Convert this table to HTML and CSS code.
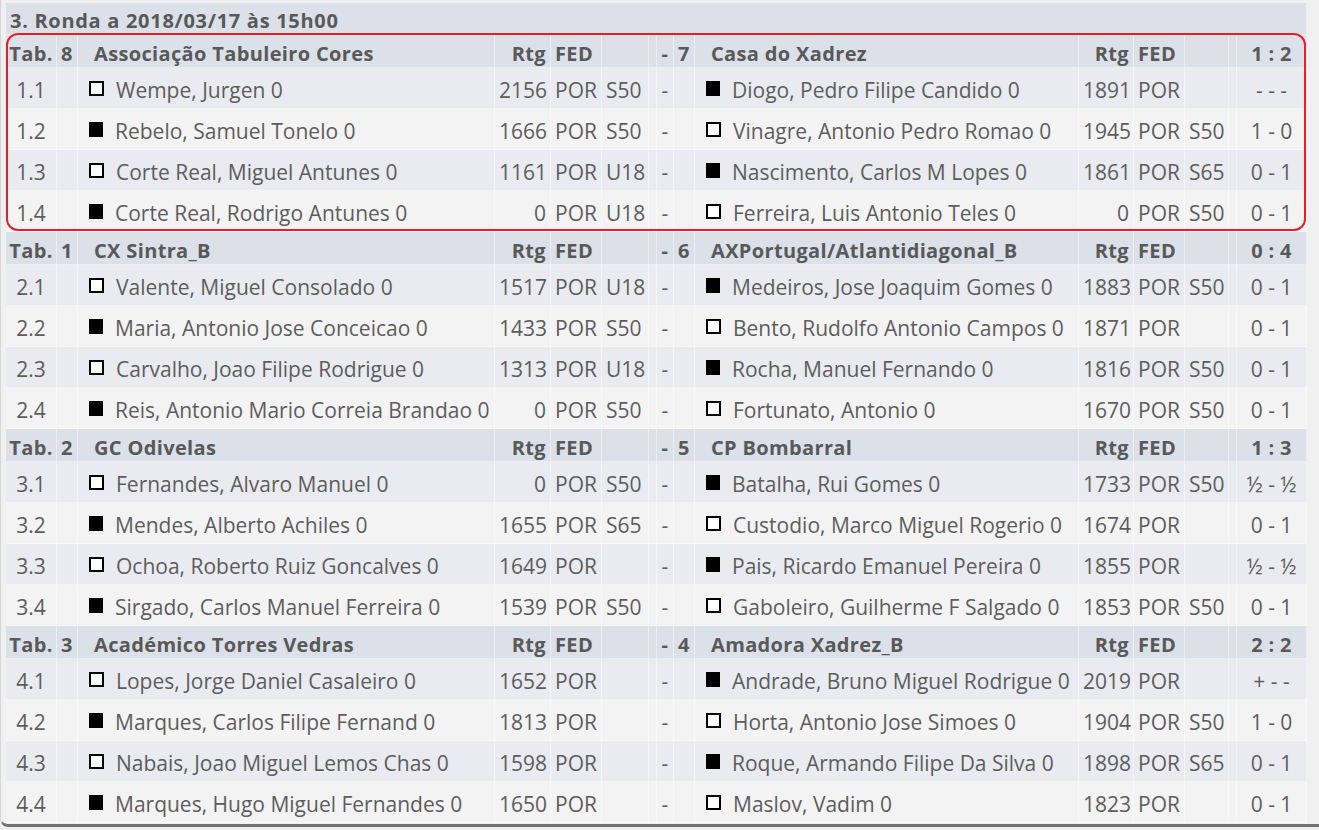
FILE: index.html
```html
<!DOCTYPE html>
<html>
<head>
<meta charset="utf-8">
<link rel="stylesheet" href="styles.css">
</head>
<body>
<div class="frame">
<table class="pair">
<colgroup>
<col class="w1"><col class="w2"><col class="w3"><col class="w4"><col class="w5"><col class="w6"><col class="w7"><col class="w8"><col class="w9"><col class="w10"><col class="w11"><col class="w12"><col class="w13"><col class="w14"><col class="w15">
</colgroup>
<tr class="ttl"><td colspan="15">3. Ronda a 2018/03/17 às 15h00</td></tr>

<tr class="hd"><td class="c">Tab.</td><td class="c">8</td><td class="tm">Associação Tabuleiro Cores</td><td class="r">Rtg</td><td>FED</td><td></td><td></td><td class="c">-</td><td class="c">7</td><td class="tm">Casa do Xadrez</td><td class="r">Rtg</td><td>FED</td><td></td><td></td><td class="c">1 : 2</td></tr>
<tr class="ra"><td class="c">1.1</td><td></td><td class="nm"><span class="sq"></span>Wempe, Jurgen 0</td><td class="r">2156</td><td>POR</td><td>S50</td><td></td><td class="c">-</td><td></td><td class="nm"><span class="sq bk"></span>Diogo, Pedro Filipe Candido 0</td><td class="r">1891</td><td>POR</td><td></td><td></td><td class="c">- - -</td></tr>
<tr class="rb"><td class="c">1.2</td><td></td><td class="nm"><span class="sq bk"></span>Rebelo, Samuel Tonelo 0</td><td class="r">1666</td><td>POR</td><td>S50</td><td></td><td class="c">-</td><td></td><td class="nm"><span class="sq"></span>Vinagre, Antonio Pedro Romao 0</td><td class="r">1945</td><td>POR</td><td>S50</td><td></td><td class="c">1 - 0</td></tr>
<tr class="ra"><td class="c">1.3</td><td></td><td class="nm"><span class="sq"></span>Corte Real, Miguel Antunes 0</td><td class="r">1161</td><td>POR</td><td>U18</td><td></td><td class="c">-</td><td></td><td class="nm"><span class="sq bk"></span>Nascimento, Carlos M Lopes 0</td><td class="r">1861</td><td>POR</td><td>S65</td><td></td><td class="c">0 - 1</td></tr>
<tr class="rb"><td class="c">1.4</td><td></td><td class="nm"><span class="sq bk"></span>Corte Real, Rodrigo Antunes 0</td><td class="r">0</td><td>POR</td><td>U18</td><td></td><td class="c">-</td><td></td><td class="nm"><span class="sq"></span>Ferreira, Luis Antonio Teles 0</td><td class="r">0</td><td>POR</td><td>S50</td><td></td><td class="c">0 - 1</td></tr>

<tr class="hd"><td class="c">Tab.</td><td class="c">1</td><td class="tm">CX Sintra_B</td><td class="r">Rtg</td><td>FED</td><td></td><td></td><td class="c">-</td><td class="c">6</td><td class="tm">AXPortugal/Atlantidiagonal_B</td><td class="r">Rtg</td><td>FED</td><td></td><td></td><td class="c">0 : 4</td></tr>
<tr class="ra"><td class="c">2.1</td><td></td><td class="nm"><span class="sq"></span>Valente, Miguel Consolado 0</td><td class="r">1517</td><td>POR</td><td>U18</td><td></td><td class="c">-</td><td></td><td class="nm"><span class="sq bk"></span>Medeiros, Jose Joaquim Gomes 0</td><td class="r">1883</td><td>POR</td><td>S50</td><td></td><td class="c">0 - 1</td></tr>
<tr class="rb"><td class="c">2.2</td><td></td><td class="nm"><span class="sq bk"></span>Maria, Antonio Jose Conceicao 0</td><td class="r">1433</td><td>POR</td><td>S50</td><td></td><td class="c">-</td><td></td><td class="nm"><span class="sq"></span>Bento, Rudolfo Antonio Campos 0</td><td class="r">1871</td><td>POR</td><td></td><td></td><td class="c">0 - 1</td></tr>
<tr class="ra"><td class="c">2.3</td><td></td><td class="nm"><span class="sq"></span>Carvalho, Joao Filipe Rodrigue 0</td><td class="r">1313</td><td>POR</td><td>U18</td><td></td><td class="c">-</td><td></td><td class="nm"><span class="sq bk"></span>Rocha, Manuel Fernando 0</td><td class="r">1816</td><td>POR</td><td>S50</td><td></td><td class="c">0 - 1</td></tr>
<tr class="rb"><td class="c">2.4</td><td></td><td class="nm"><span class="sq bk"></span>Reis, Antonio Mario Correia Brandao 0</td><td class="r">0</td><td>POR</td><td>S50</td><td></td><td class="c">-</td><td></td><td class="nm"><span class="sq"></span>Fortunato, Antonio 0</td><td class="r">1670</td><td>POR</td><td>S50</td><td></td><td class="c">0 - 1</td></tr>

<tr class="hd"><td class="c">Tab.</td><td class="c">2</td><td class="tm">GC Odivelas</td><td class="r">Rtg</td><td>FED</td><td></td><td></td><td class="c">-</td><td class="c">5</td><td class="tm">CP Bombarral</td><td class="r">Rtg</td><td>FED</td><td></td><td></td><td class="c">1 : 3</td></tr>
<tr class="ra"><td class="c">3.1</td><td></td><td class="nm"><span class="sq"></span>Fernandes, Alvaro Manuel 0</td><td class="r">0</td><td>POR</td><td>S50</td><td></td><td class="c">-</td><td></td><td class="nm"><span class="sq bk"></span>Batalha, Rui Gomes 0</td><td class="r">1733</td><td>POR</td><td>S50</td><td></td><td class="c">½ - ½</td></tr>
<tr class="rb"><td class="c">3.2</td><td></td><td class="nm"><span class="sq bk"></span>Mendes, Alberto Achiles 0</td><td class="r">1655</td><td>POR</td><td>S65</td><td></td><td class="c">-</td><td></td><td class="nm"><span class="sq"></span>Custodio, Marco Miguel Rogerio 0</td><td class="r">1674</td><td>POR</td><td></td><td></td><td class="c">0 - 1</td></tr>
<tr class="ra"><td class="c">3.3</td><td></td><td class="nm"><span class="sq"></span>Ochoa, Roberto Ruiz Goncalves 0</td><td class="r">1649</td><td>POR</td><td></td><td></td><td class="c">-</td><td></td><td class="nm"><span class="sq bk"></span>Pais, Ricardo Emanuel Pereira 0</td><td class="r">1855</td><td>POR</td><td></td><td></td><td class="c">½ - ½</td></tr>
<tr class="rb"><td class="c">3.4</td><td></td><td class="nm"><span class="sq bk"></span>Sirgado, Carlos Manuel Ferreira 0</td><td class="r">1539</td><td>POR</td><td>S50</td><td></td><td class="c">-</td><td></td><td class="nm"><span class="sq"></span>Gaboleiro, Guilherme F Salgado 0</td><td class="r">1853</td><td>POR</td><td>S50</td><td></td><td class="c">0 - 1</td></tr>

<tr class="hd"><td class="c">Tab.</td><td class="c">3</td><td class="tm">Académico Torres Vedras</td><td class="r">Rtg</td><td>FED</td><td></td><td></td><td class="c">-</td><td class="c">4</td><td class="tm">Amadora Xadrez_B</td><td class="r">Rtg</td><td>FED</td><td></td><td></td><td class="c">2 : 2</td></tr>
<tr class="ra"><td class="c">4.1</td><td></td><td class="nm"><span class="sq"></span>Lopes, Jorge Daniel Casaleiro 0</td><td class="r">1652</td><td>POR</td><td></td><td></td><td class="c">-</td><td></td><td class="nm"><span class="sq bk"></span>Andrade, Bruno Miguel Rodrigue 0</td><td class="r">2019</td><td>POR</td><td></td><td></td><td class="c">+ - -</td></tr>
<tr class="rb"><td class="c">4.2</td><td></td><td class="nm"><span class="sq bk"></span>Marques, Carlos Filipe Fernand 0</td><td class="r">1813</td><td>POR</td><td></td><td></td><td class="c">-</td><td></td><td class="nm"><span class="sq"></span>Horta, Antonio Jose Simoes 0</td><td class="r">1904</td><td>POR</td><td>S50</td><td></td><td class="c">1 - 0</td></tr>
<tr class="ra"><td class="c">4.3</td><td></td><td class="nm"><span class="sq"></span>Nabais, Joao Miguel Lemos Chas 0</td><td class="r">1598</td><td>POR</td><td></td><td></td><td class="c">-</td><td></td><td class="nm"><span class="sq bk"></span>Roque, Armando Filipe Da Silva 0</td><td class="r">1898</td><td>POR</td><td>S65</td><td></td><td class="c">0 - 1</td></tr>
<tr class="rb"><td class="c">4.4</td><td></td><td class="nm"><span class="sq bk"></span>Marques, Hugo Miguel Fernandes 0</td><td class="r">1650</td><td>POR</td><td></td><td></td><td class="c">-</td><td></td><td class="nm"><span class="sq"></span>Maslov, Vadim 0</td><td class="r">1823</td><td>POR</td><td></td><td></td><td class="c">0 - 1</td></tr>
</table>
<div class="mark"></div>
</div>
</body>
</html>
```

FILE: styles.css
```css
html, body {
  margin: 0;
  padding: 0;
  background: #f0f0f0;
}
.frame {
  position: relative;
  box-sizing: border-box;
  width: 1319px;
  height: 827px;
  padding: 3px 0 0 5px;
  border-left: 1px solid #d6d6d6;
  border-bottom: 3px solid #717171;
  border-bottom-left-radius: 8px;
}
.pair {
  table-layout: fixed;
  border-collapse: separate;
  border-spacing: 0;
  width: 1301px;
  font-family: "Open Sans", "Noto Sans", sans-serif;
  font-size: 21px;
  color: #5d5d5d;
}
.w1 { width: 51px; }
.w2 { width: 21px; }
.w3 { width: 417px; }
.w4 { width: 56px; }
.w5 { width: 51px; }
.w6 { width: 47px; }
.w7 { width: 8px; }
.w8 { width: 17px; }
.w9 { width: 21px; }
.w10 { width: 384px; }
.w11 { width: 55px; }
.w12 { width: 51px; }
.w13 { width: 44px; }
.w14 { width: 8px; }
.w15 { width: 70px; }
.pair td {
  box-sizing: border-box;
  padding: 4px 4px 0 4px;
  white-space: nowrap;
  overflow: hidden;
  text-align: left;
  border-right: 1px solid rgba(255, 255, 255, 0.45);
  border-bottom: 1px solid rgba(255, 255, 255, 0.45);
  line-height: 24px;
}
.pair td.c { text-align: center; padding-left: 0; padding-right: 0; }
.pair td.r { text-align: right; }
.ttl td {
  height: 32px;
  background: #dce0e8;
  font-weight: 700;
  font-size: 20px;
  letter-spacing: 0.7px;
  color: #595959;
  padding-left: 4px;
}
.pair .hd td {
  height: 33px;
  padding-top: 6px;
  background: #dce0e8;
  font-weight: 700;
  font-size: 20px;
  letter-spacing: 0.35px;
  color: #595959;
}
.pair .hd td.tm { padding-left: 16px; }
.ra td {
  height: 41px;
  background: #e9ebf0;
}
.rb td {
  height: 41px;
  background: #f3f3f3;
}
.pair td.nm { padding-left: 11px; }
.sq {
  display: inline-block;
  box-sizing: border-box;
  width: 15px;
  height: 15px;
  border: 2px solid #000;
  background: #fff;
  margin-right: 12px;
  vertical-align: 2px;
}
.sq.bk { background: #000; width: 14px; margin-right: 12px; }
.mark {
  position: absolute;
  left: 5px;
  top: 33px;
  width: 1300px;
  height: 198px;
  box-sizing: border-box;
  border: 2px solid #e3212b;
  border-radius: 12px;
  pointer-events: none;
}
```
